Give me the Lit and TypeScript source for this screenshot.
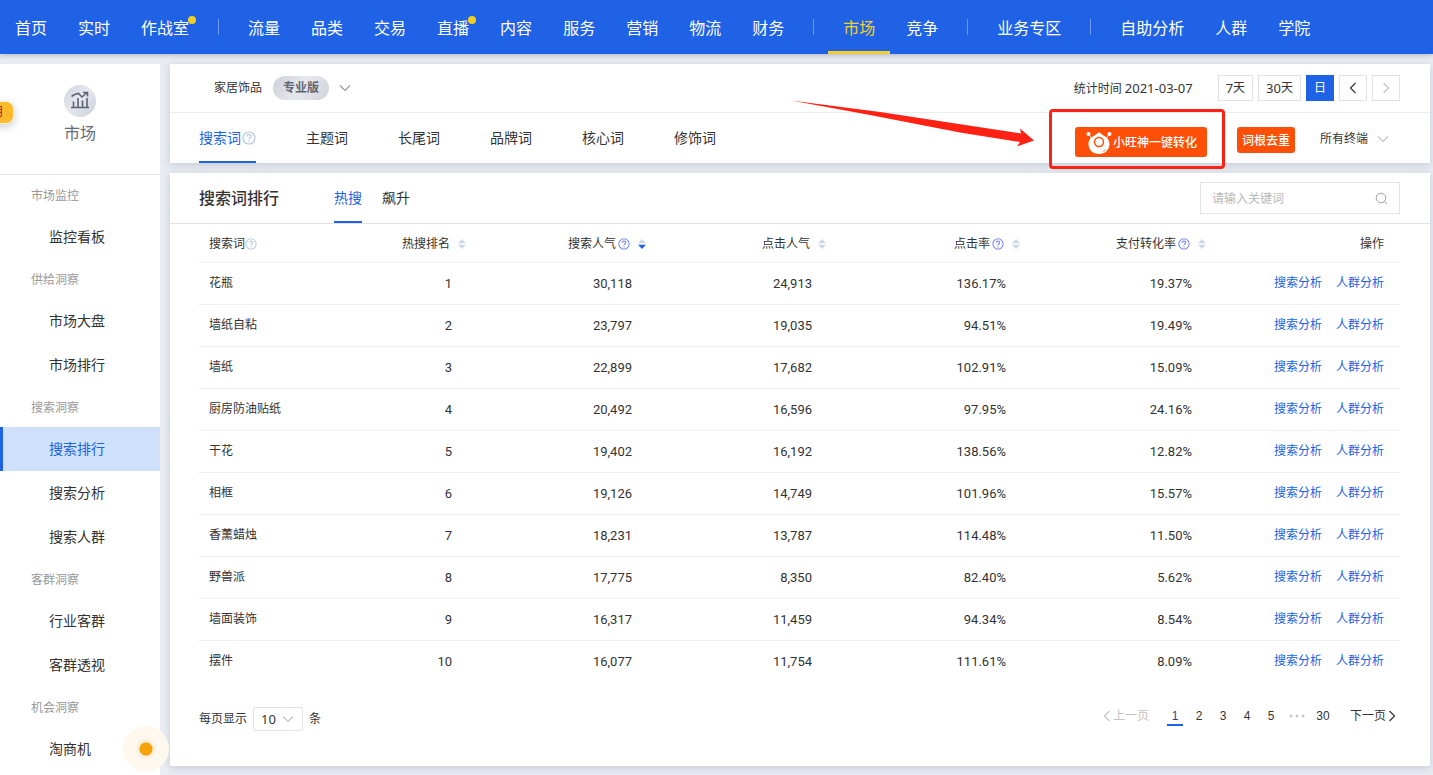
import { LitElement, html, css, svg, nothing } from "lit";
import { customElement, property } from "lit/decorators.js";
import { classMap } from "lit/directives/class-map.js";

type NavItem = { label: string; dot?: boolean; active?: boolean };

const NAV: NavItem[][] = [
  [{ label: "首页" }, { label: "实时" }, { label: "作战室", dot: true }],
  [
    { label: "流量" },
    { label: "品类" },
    { label: "交易" },
    { label: "直播", dot: true },
    { label: "内容" },
    { label: "服务" },
    { label: "营销" },
    { label: "物流" },
    { label: "财务" },
  ],
  [{ label: "市场", active: true }, { label: "竞争" }],
  [{ label: "业务专区" }],
  [{ label: "自助分析" }, { label: "人群" }, { label: "学院" }],
];

const MENU = [
  { title: "市场监控", items: ["监控看板"] },
  { title: "供给洞察", items: ["市场大盘", "市场排行"] },
  { title: "搜索洞察", items: ["搜索排行", "搜索分析", "搜索人群"] },
  { title: "客群洞察", items: ["行业客群", "客群透视"] },
  { title: "机会洞察", items: ["淘商机"] },
];
const CURRENT = "搜索排行";

const COLUMNS = [
  { label: "热搜排名", help: false, sorted: false },
  { label: "搜索人气", help: true, sorted: true },
  { label: "点击人气", help: false, sorted: false },
  { label: "点击率", help: true, sorted: false },
  { label: "支付转化率", help: true, sorted: false },
];

const ROWS = [
  ["花瓶", "1", "30,118", "24,913", "136.17%", "19.37%"],
  ["墙纸自粘", "2", "23,797", "19,035", "94.51%", "19.49%"],
  ["墙纸", "3", "22,899", "17,682", "102.91%", "15.09%"],
  ["厨房防油贴纸", "4", "20,492", "16,596", "97.95%", "24.16%"],
  ["干花", "5", "19,402", "16,192", "138.56%", "12.82%"],
  ["相框", "6", "19,126", "14,749", "101.96%", "15.57%"],
  ["香薰蜡烛", "7", "18,231", "13,787", "114.48%", "11.50%"],
  ["野兽派", "8", "17,775", "8,350", "82.40%", "5.62%"],
  ["墙面装饰", "9", "16,317", "11,459", "94.34%", "8.54%"],
  ["摆件", "10", "16,077", "11,754", "111.61%", "8.09%"],
];

const stroke = (d: string, w: number, h: number) => html`<svg
  width=${w}
  height=${h}
  viewBox="0 0 ${w} ${h}"
  fill="none"
  stroke="currentColor"
  stroke-width="1.2"
  aria-hidden="true"
>
  ${svg`<path d=${d} />`}
</svg>`;

const chevronDown = () => stroke("M1 1.5L6 6.5L11 1.5", 12, 8);
const chevronLeft = () => stroke("M6.5 1L1.5 6L6.5 11", 8, 12);
const chevronRight = () => stroke("M1.5 1L6.5 6L1.5 11", 8, 12);

const help = (size: number) => html`<svg
  class="help"
  width=${size}
  height=${size}
  viewBox="0 0 14 14"
  fill="none"
  stroke="currentColor"
  aria-hidden="true"
>
  <circle cx="7" cy="7" r="6" stroke-width="1.2" />
  <path d="M5 5.6C5 3 9 3 9 5.4C9 6.8 7 6.8 7 8.6" stroke-width="1.3" />
  <circle cx="7" cy="10.3" r="0.8" fill="currentColor" stroke="none" />
</svg>`;

const base = css`
  :host {
    font-family: "Noto Sans", "Noto Sans CJK SC", sans-serif;
    font-size: 12px;
    line-height: 20px;
    color: #333;
  }
  * {
    box-sizing: border-box;
  }
  a {
    color: inherit;
    text-decoration: none;
  }
  button,
  input,
  select {
    font: inherit;
    color: inherit;
    margin: 0;
  }
  svg {
    display: block;
    flex: none;
  }
`;

@customElement("top-nav")
class TopNav extends LitElement {
  static styles = [
    base,
    css`
      :host {
        display: block;
        position: relative;
        z-index: 2;
        background: #2062e6;
        box-shadow: 0 1px 5px rgba(60, 70, 90, 0.35);
      }
      .nav {
        display: flex;
        align-items: center;
        height: 54px;
        padding: 0 15px;
        font-size: 16px;
        white-space: nowrap;
        color: #fff;
      }
      .group {
        display: flex;
        gap: 31px;
        align-self: stretch;
      }
      .group + .group::before {
        content: "";
        align-self: center;
        width: 1px;
        height: 16px;
        margin-left: 29px;
        margin-right: -2px;
        background: rgba(255, 255, 255, 0.35);
      }
      .item {
        position: relative;
        display: flex;
        align-items: center;
        padding-top: 2px;
      }
      .active {
        color: #f3d02c;
      }
      .active::after {
        content: "";
        position: absolute;
        left: -15px;
        right: -15px;
        bottom: 0;
        height: 3px;
        background: #f3d02c;
      }
      .dot {
        position: absolute;
        right: -7px;
        top: 16px;
        width: 8px;
        height: 8px;
        border-radius: 50%;
        background: #f3cf22;
      }
    `,
  ];
  render() {
    return html`<nav class="nav" aria-label="主导航">
      ${NAV.map(
        (g) => html`<div class="group">
          ${g.map(
            (i) => html`<a href="#" class=${classMap({ item: true, active: !!i.active })}
              >${i.label}${i.dot ? html`<span class="dot"></span>` : nothing}</a
            >`
          )}
        </div>`
      )}
    </nav>`;
  }
}

@customElement("side-menu")
class SideMenu extends LitElement {
  static styles = [
    base,
    css`
      :host {
        display: block;
        position: relative;
        flex: none;
        width: 160px;
        background: #fff;
      }
      .head {
        display: flex;
        flex-direction: column;
        align-items: center;
        gap: 4px;
        height: 111px;
        padding-top: 21px;
        border-bottom: 1px solid #e8e9ec;
        font-size: 16px;
        line-height: 24px;
        color: #666b78;
      }
      .title {
        padding-top: 2px;
        padding-left: 31px;
        line-height: 38px;
        color: #999;
      }
      .item {
        display: block;
        padding-left: 49px;
        font-size: 14px;
        line-height: 44px;
      }
      .current {
        background: #cfe0fa;
        box-shadow: inset 3px 0 #2062e6;
        color: #2062e6;
      }
      .badge {
        position: absolute;
        left: -24px;
        top: 37px;
        width: 38px;
        height: 23px;
        padding-right: 9px;
        border: 1px solid #fff3d8;
        border-radius: 8px;
        background: #ffba2c;
        box-shadow: 0 3px 8px rgba(60, 60, 60, 0.25);
        color: #a02c10;
        text-align: right;
      }
      .beacon {
        position: absolute;
        left: 123px;
        top: 662px;
        width: 46px;
        height: 46px;
        border-radius: 50%;
        background: radial-gradient(circle, #f5a20a 6px, #f7ead6 7px, #fff8ee 11px);
      }
    `,
  ];
  render() {
    return html`
      <div class="head">
        <svg width="32" height="32" viewBox="0 0 32 32" aria-hidden="true">
          <defs>
            <linearGradient id="g" x1="0" y1="0" x2="1" y2="1">
              <stop offset="0" stop-color="#cfd3dc" />
              <stop offset="0.45" stop-color="#e6e8ee" />
              <stop offset="1" stop-color="#cbcfd8" />
            </linearGradient>
          </defs>
          <circle cx="16" cy="16" r="16" fill="url(#g)" />
          <path
            d="M7 22.5H25M9.5 22V16.5M14 22V13M18.5 22V15.5M23 22V13M7.5 11.5L10.5 9.5L14.5 8.5L18 12L23 7.5M19 7.5H23.5V11.5"
            fill="none"
            stroke="#5f6473"
            stroke-width="1.6"
          />
        </svg>
        市场
      </div>
      <nav aria-label="市场">
        ${MENU.map(
          (g) => html`<div class="title">${g.title}</div>
            ${g.items.map(
              (i) => html`<a href="#" class=${classMap({ item: true, current: i === CURRENT })}>${i}</a>`
            )}`
        )}
      </nav>
      <span class="badge">月</span>
      <span class="beacon"></span>
    `;
  }
}

@customElement("sort-arrows")
class SortArrows extends LitElement {
  @property({ type: Boolean }) desc = false;
  static styles = [
    base,
    css`
      :host {
        display: inline-block;
      }
    `,
  ];
  render() {
    return html`<svg width="8" height="12" viewBox="0 0 8 12" aria-hidden="true">
      <path d="M0 5.2L4 1L8 5.2Z" fill="#cdd9e6" />
      <path d="M0 6.8L4 11L8 6.8Z" fill=${this.desc ? "#2062e6" : "#cdd9e6"} />
    </svg>`;
  }
}

@customElement("filter-bar")
class FilterBar extends LitElement {
  static styles = [
    base,
    css`
      :host {
        display: block;
        background: #fff;
        box-shadow: 0 2px 8px rgba(60, 75, 100, 0.2);
      }
      .row {
        display: flex;
        align-items: center;
        height: 49px;
        padding: 0 30px 0 44px;
        border-bottom: 1px solid #ebecee;
      }
      .pill {
        margin: 0 10px 0 11px;
        padding: 0 10px;
        border-radius: 12px;
        background: linear-gradient(120deg, #cdd1da, #e7e8ed 50%, #d0d3dc);
        line-height: 24px;
        font-weight: 700;
        color: #626776;
      }
      .muted {
        color: #999;
      }
      .faint {
        color: #c4c4c4;
      }
      .push {
        margin-left: auto;
      }
      .num {
        font-size: 13px;
      }
      .dates {
        display: flex;
        gap: 5px;
        margin-left: 25px;
      }
      .date {
        display: flex;
        align-items: center;
        justify-content: center;
        min-width: 28px;
        height: 26px;
        padding: 0 7px;
        border: 1px solid #e2e3e6;
        background: #fff;
      }
      .on {
        border-color: #2062e6;
        background: #2062e6;
        color: #fff;
      }
      .tabs {
        display: flex;
        height: 50px;
        padding: 0 32px 0 29px;
      }
      .tablist {
        display: flex;
        gap: 50px;
      }
      .tab {
        display: flex;
        align-items: center;
        gap: 1px;
        padding: 0;
        border: 0;
        border-bottom: 2px solid transparent;
        border-top: 2px solid transparent;
        background: none;
        font-size: 14px;
      }
      .selected {
        border-bottom-color: #2062e6;
        color: #2062e6;
      }
      .selected .help {
        color: #b5c8e4;
      }
      .tools {
        display: flex;
        align-items: flex-start;
        margin-left: auto;
        padding-top: 14px;
      }
      .promo {
        position: relative;
        margin-right: 30px;
      }
      .hot {
        display: flex;
        align-items: center;
        height: 26px;
        padding: 1px 5px 0;
        border: 0;
        border-radius: 3px;
        background: #fd4f08;
        color: #fff;
        font-weight: 500;
      }
      .big {
        height: 30px;
        padding: 1px 10px 0 11px;
        gap: 1px;
      }
      .frame {
        position: absolute;
        top: -18px;
        right: -18px;
        bottom: -12px;
        left: -26px;
        border: 3px solid #ff2113;
        border-radius: 4px;
        pointer-events: none;
      }
      .arrow {
        position: absolute;
        right: 173px;
        top: -29px;
        pointer-events: none;
      }
      .terminal {
        position: relative;
        display: flex;
        align-items: center;
        height: 24px;
        margin-left: 25px;
      }
      .terminal select {
        appearance: none;
        width: 78px;
        padding: 0;
        border: 0;
        background: none;
      }
      .terminal svg {
        position: absolute;
        right: 9px;
        color: #c4c4c4;
        pointer-events: none;
      }
    `,
  ];
  render() {
    return html`
      <div class="row">
        <span>家居饰品</span><span class="pill">专业版</span><span class="muted">${chevronDown()}</span>
        <span class="push">统计时间 <span class="num">2021-03-07</span></span>
        <div class="dates">
          <button class="date"><span class="num">7</span>天</button>
          <button class="date"><span class="num">30</span>天</button>
          <button class="date on">日</button>
          <button class="date" aria-label="前一天">${chevronLeft()}</button>
          <button class="date faint" aria-label="后一天">${chevronRight()}</button>
        </div>
      </div>
      <div class="tabs">
        <div class="tablist" role="tablist">
          <button class="tab selected" role="tab" aria-selected="true">搜索词${help(14)}</button>
          ${["主题词", "长尾词", "品牌词", "核心词", "修饰词"].map(
            (t) => html`<button class="tab" role="tab">${t}</button>`
          )}
        </div>
        <div class="tools">
          <div class="promo">
            <button class="hot big">
              <svg width="26" height="26" viewBox="0 0 26 26" aria-hidden="true">
                <path
                  d="M13 2.5C14.5 2.5 15.5 4.5 17.5 5.500C21 7 23.500 10 23.500 14C23.500 20 19 24 13 24C7 24 2.500 20 2.500 14C2.500 10 5 7 8.500 5.500C10.500 4.500 11.500 2.500 13 2.500Z"
                  fill="#fff"
                />
                <path d="M2.500 4L6.500 9M23.500 4L19.500 9" stroke="#fff" stroke-width="1" />
                <circle cx="2.500" cy="4" r="2" fill="#fff" />
                <circle cx="23.500" cy="4" r="2" fill="#fff" />
                <circle cx="13" cy="12" r="4.500" fill="none" stroke="#fd4f08" stroke-width="1.500" />
                <path d="M16 22Q19 21.500 20 19L18 20.500Z" fill="#fd4f08" />
              </svg>
              小旺神一键转化
            </button>
            <span class="frame"></span>
            <svg class="arrow" width="246" height="54" viewBox="788 98 246 54" aria-hidden="true">
              <path
                d="M791 100.500L880 112L1021 133.500L1020 128.500L1034 140.500L1017 146.500L1020 142L960 132.500L870 115Z"
                fill="#ff2113"
              />
            </svg>
          </div>
          <button class="hot">词根去重</button>
          <label class="terminal">
            <select aria-label="终端">
              <option>所有终端</option>
            </select>
            ${chevronDown()}
          </label>
        </div>
      </div>
    `;
  }
}

@customElement("rank-panel")
class RankPanel extends LitElement {
  static styles = [
    base,
    css`
      :host {
        display: block;
        background: #fff;
        box-shadow: 0 2px 8px rgba(60, 75, 100, 0.2);
      }
      .head {
        display: flex;
        align-items: center;
        height: 51px;
        padding: 0 30px 0 29px;
        border-bottom: 1px solid #dfe1e4;
      }
      .title {
        margin: 0 55px 0 0;
        font-size: 16px;
        font-weight: 500;
      }
      .tab {
        align-self: stretch;
        margin-right: 20px;
        padding: 0;
        border: 0;
        border-top: 2px solid transparent;
        border-bottom: 2px solid transparent;
        background: none;
        font-size: 14px;
      }
      .selected {
        border-bottom-color: #2062e6;
        color: #2062e6;
      }
      .search {
        display: flex;
        align-items: center;
        width: 200px;
        height: 32px;
        margin-left: auto;
        padding: 0 11px;
        border: 1px solid #e2e3e6;
        color: #a0a0a0;
      }
      .search input {
        flex: 1;
        min-width: 0;
        padding: 2px 0 0;
        border: 0;
        outline: 0;
        background: none;
      }
      .search input::placeholder {
        color: #b8b8b8;
      }
      .body {
        padding: 0 30px 0 29px;
      }
      table {
        width: 100%;
        table-layout: fixed;
        border-collapse: collapse;
      }
      .c1 {
        width: 137px;
      }
      .c2 {
        width: 140px;
      }
      .c3 {
        width: 180px;
      }
      .c5 {
        width: 194px;
      }
      .c6 {
        width: 186px;
      }
      .c7 {
        width: 184px;
      }
      th,
      td {
        height: 42px;
        padding: 0 10px;
        text-align: left;
        font-weight: 400;
        white-space: nowrap;
      }
      th {
        height: 38px;
        padding-top: 2px;
      }
      tr {
        border-bottom: 1px solid #f0f0f2;
      }
      tbody tr:last-child {
        border-bottom: 0;
      }
      .cell {
        display: flex;
        align-items: center;
        justify-content: flex-end;
      }
      .cell .help {
        margin-left: 2px;
        color: #7688ee;
      }
      .first {
        justify-content: flex-start;
      }
      .first .help {
        margin-left: 0;
        color: #b9cbe0;
      }
      .cell sort-arrows {
        margin-left: 8px;
      }
      .value {
        padding-top: 2px;
        padding-right: 24px;
        text-align: right;
        font-family: Roboto, "Noto Sans", sans-serif;
        font-size: 13px;
      }
      .ops {
        padding-right: 16px;
        text-align: right;
      }
      .link {
        margin-left: 14px;
        color: #2062e6;
      }
      .foot {
        display: flex;
        align-items: center;
        justify-content: space-between;
        height: 84px;
        padding: 24px 34px 35px 29px;
      }
      .size {
        display: flex;
        align-items: center;
        gap: 6px;
      }
      .box {
        position: relative;
        display: flex;
        align-items: center;
        color: #c4c4c4;
      }
      .box svg {
        position: absolute;
        right: 9px;
        pointer-events: none;
      }
      .box select {
        appearance: none;
        width: 50px;
        height: 24px;
        padding: 0 7px;
        border: 1px solid #e2e3e6;
        border-radius: 2px;
        background: #fff;
        color: #333;
        font-size: 13px;
      }
      .pages {
        display: flex;
        align-items: center;
        gap: 8px;
        padding-bottom: 5px;
        font-family: "Liberation Sans", "Noto Sans CJK SC", sans-serif;
      }
      .page {
        min-width: 16px;
        padding-top: 2px;
        border-bottom: 2px solid transparent;
        line-height: 16px;
        text-align: center;
      }
      .cur {
        border-bottom-color: #2062e6;
        color: #2f3d8c;
      }
      .step {
        display: flex;
        align-items: center;
        gap: 2px;
        padding: 0;
        border: 0;
        background: none;
      }
      .prev {
        margin-right: 10px;
        color: #c4c4c4;
      }
      .next {
        margin-left: 11px;
      }
      .more {
        margin: 0 2px;
        color: #c8c8c8;
      }
    `,
  ];
  render() {
    return html`
      <div class="head">
        <h2 class="title">搜索词排行</h2>
        <button class="tab selected">热搜</button>
        <button class="tab">飙升</button>
        <label class="search">
          <input type="text" placeholder="请输入关键词" aria-label="关键词" />
          <svg width="13" height="13" viewBox="0 0 13 13" fill="none" stroke="currentColor" aria-hidden="true">
            <circle cx="6" cy="6" r="4.800" />
            <path d="M9.500 9.500L12 12" />
          </svg>
        </label>
      </div>
      <div class="body">
        <table>
          <colgroup>
            <col class="c1" />
            <col class="c2" />
            <col class="c3" />
            <col class="c3" />
            <col class="c5" />
            <col class="c6" />
            <col class="c7" />
          </colgroup>
          <thead>
            <tr>
              <th><div class="cell first">搜索词${help(12)}</div></th>
              ${COLUMNS.map(
                (c) => html`<th>
                  <div class="cell">
                    ${c.label}${c.help ? help(12) : nothing}<sort-arrows ?desc=${c.sorted}></sort-arrows>
                  </div>
                </th>`
              )}
              <th class="ops">操作</th>
            </tr>
          </thead>
          <tbody>
            ${ROWS.map(
              ([word, ...values]) => html`<tr>
                <td>${word}</td>
                ${values.map((v) => html`<td class="value">${v}</td>`)}
                <td class="ops"><a class="link" href="#">搜索分析</a><a class="link" href="#">人群分析</a></td>
              </tr>`
            )}
          </tbody>
        </table>
      </div>
      <div class="foot">
        <div class="size">
          <label for="size">每页显示</label>
          <span class="box"
            ><select id="size">
              <option>10</option></select
            >${chevronDown()}</span
          >
          <span>条</span>
        </div>
        <nav class="pages" aria-label="分页">
          <button class="step prev" disabled>${chevronLeft()}上一页</button>
          ${["1", "2", "3", "4", "5"].map(
            (p, i) => html`<a href="#" class=${classMap({ page: true, cur: i === 0 })}>${p}</a>`
          )}
          <svg class="more" width="16" height="4" viewBox="0 0 16 4" fill="currentColor" aria-hidden="true">
            <circle cx="2" cy="2" r="1.500" />
            <circle cx="8" cy="2" r="1.500" />
            <circle cx="14" cy="2" r="1.500" />
          </svg>
          <a href="#" class="page">30</a>
          <button class="step next">下一页${chevronRight()}</button>
        </nav>
      </div>
    `;
  }
}

@customElement("app-root")
class AppRoot extends LitElement {
  static styles = [
    base,
    css`
      :host {
        display: flex;
        flex-direction: column;
        min-height: 100vh;
        overflow: hidden;
        background: #e9ecf2;
      }
      .layout {
        display: flex;
        flex: 1;
        gap: 10px;
        padding: 10px 3px 0 0;
      }
      .main {
        display: flex;
        flex: 1;
        flex-direction: column;
        gap: 10px;
        min-width: 0;
        padding-bottom: 9px;
      }
    `,
  ];
  render() {
    return html`
      <top-nav></top-nav>
      <div class="layout">
        <side-menu></side-menu>
        <main class="main">
          <filter-bar></filter-bar>
          <rank-panel></rank-panel>
        </main>
      </div>
    `;
  }
}
